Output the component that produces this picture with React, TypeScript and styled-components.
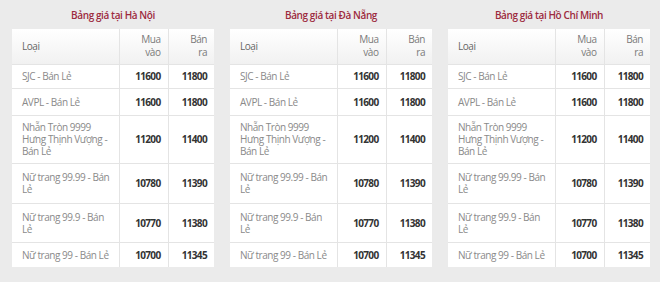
import React from "react";
import styled, { createGlobalStyle } from "styled-components";

const Global = createGlobalStyle`
  html, body { margin: 0; padding: 0; background: #ebebeb; }
  body { font-family: "Open Sans", "Noto Sans", sans-serif; }
`;

const Page = styled.div`
  display: grid;
  grid-template-columns: repeat(3, 202px);
  column-gap: 16px;
  padding-left: 12px;
  width: 660px;
  height: 282px;
  box-sizing: border-box;
`;

const Column = styled.section`
  display: flex;
  flex-direction: column;
`;

const Title = styled.h3`
  margin: 0;
  height: 29px;
  padding-top: 9px;
  box-sizing: border-box;
  font-size: 10px;
  line-height: 12px;
  font-weight: 600;
  letter-spacing: -0.4px;
  color: #9d2a3e;
  text-align: center;
`;

const Table = styled.table`
  width: 202px;
  table-layout: fixed;
  border-collapse: collapse;
  background: #fff;
  font-size: 10px;
  line-height: 12px;
  letter-spacing: -0.45px;
`;

const HeadRow = styled.tr`
  height: 35px;
  background: linear-gradient(to bottom, #ffffff, #f1f1f1);
`;

const Row = styled.tr<{ $h: number }>`
  height: ${(p) => p.$h}px;
`;

const Th = styled.th<{ $num?: boolean }>`
  padding: 0 ${(p) => (p.$num ? "7px" : "10px")};
  font-weight: 400;
  line-height: 13px;
  color: ${(p) => (p.$num ? "#7a7a7a" : "#666")};
  text-align: ${(p) => (p.$num ? "right" : "left")};
  vertical-align: middle;
  border-left: ${(p) => (p.$num ? "1px solid #e4e4e4" : "none")};
`;

const HeadLine = styled.span`
  display: block;
`;

const NameCell = styled.td`
  padding: 0 6px 0 10px;
  color: #8a8a8a;
  vertical-align: middle;
  border-top: 1px solid #e4e4e4;
`;

const NumCell = styled.td`
  padding: 0 7px;
  color: #333;
  font-weight: 700;
  letter-spacing: -0.65px;
  text-align: right;
  vertical-align: middle;
  border-top: 1px solid #e4e4e4;
  border-left: 1px solid #e4e4e4;
`;

type Item = { name: string; buy: string; sell: string; h: number };

const rows: Item[] = [
  { name: "SJC - Bán Lẻ", buy: "11600", sell: "11800", h: 24 },
  { name: "AVPL - Bán Lẻ", buy: "11600", sell: "11800", h: 27 },
  { name: "Nhẫn Tròn 9999 Hưng Thịnh Vượng - Bán Lẻ", buy: "11200", sell: "11400", h: 48 },
  { name: "Nữ trang 99.99 - Bán Lẻ", buy: "10780", sell: "11390", h: 40 },
  { name: "Nữ trang 99.9 - Bán Lẻ", buy: "10770", sell: "11380", h: 39 },
  { name: "Nữ trang 99 - Bán Lẻ", buy: "10700", sell: "11345", h: 25 },
];

const cities = ["Hà Nội", "Đà Nẵng", "Hồ Chí Minh"];

function PriceTable({ city }: { city: string }) {
  return (
    <Column>
      <Title>Bảng giá tại {city}</Title>
      <Table>
        <colgroup>
          <col style={{ width: 107 }} />
          <col style={{ width: 49 }} />
          <col style={{ width: 46 }} />
        </colgroup>
        <thead>
          <HeadRow>
            <Th>Loại</Th>
            <Th $num>
              <HeadLine>Mua</HeadLine>
              <HeadLine>vào</HeadLine>
            </Th>
            <Th $num>
              <HeadLine>Bán</HeadLine>
              <HeadLine>ra</HeadLine>
            </Th>
          </HeadRow>
        </thead>
        <tbody>
          {rows.map((r) => (
            <Row key={r.name} $h={r.h}>
              <NameCell>{r.name}</NameCell>
              <NumCell>{r.buy}</NumCell>
              <NumCell>{r.sell}</NumCell>
            </Row>
          ))}
        </tbody>
      </Table>
    </Column>
  );
}

export default function App() {
  return (
    <>
      <Global />
      <Page>
        {cities.map((c) => (
          <PriceTable key={c} city={c} />
        ))}
      </Page>
    </>
  );
}
